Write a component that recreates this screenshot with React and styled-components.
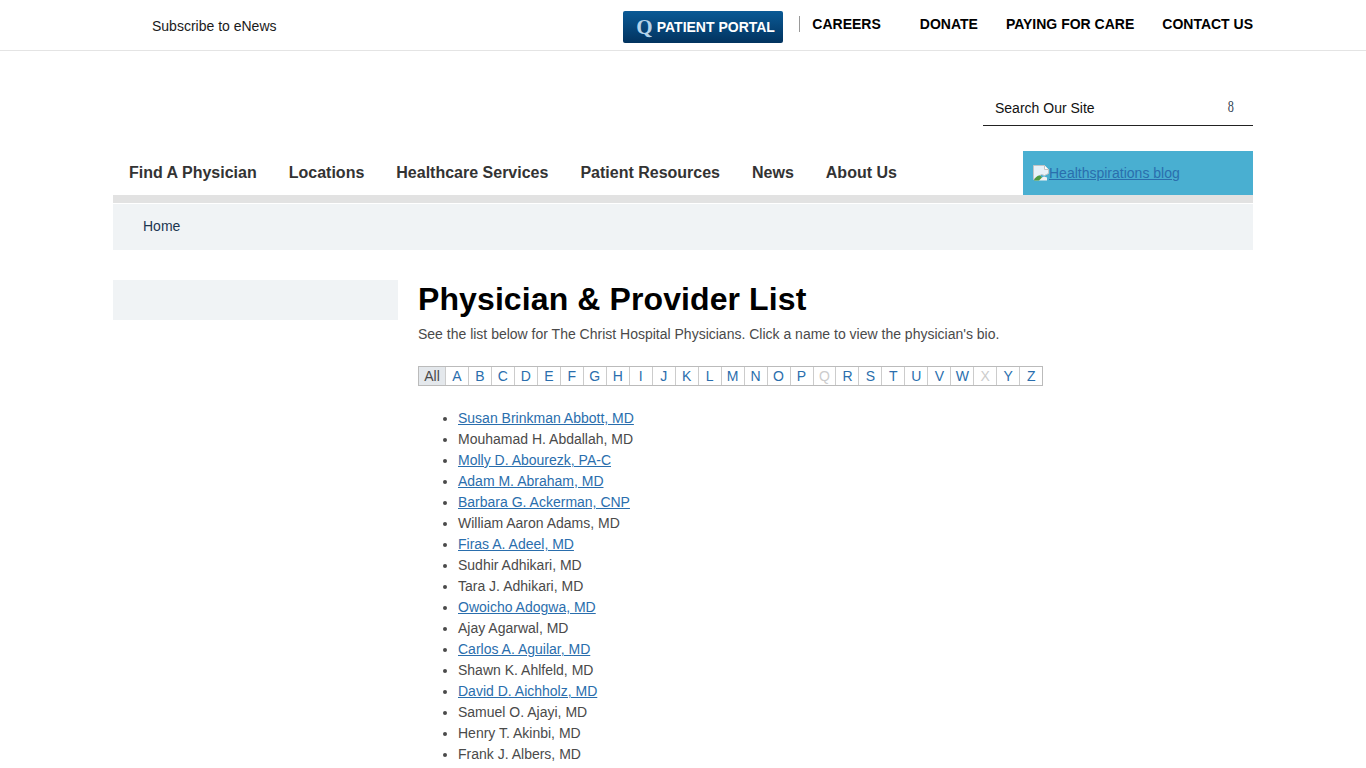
import React from "react";
import styled, { createGlobalStyle } from "styled-components";

const Global = createGlobalStyle`
  html, body { margin: 0; padding: 0; background: #fff; }
  body { font-family: "Liberation Sans", Arial, sans-serif; font-size: 14px; color: #4a4a4a; overflow: hidden; height: 768px; }
`;
const TopBar = styled.header`
  height: 50px; border-bottom: 1px solid #e4e4e4; display: flex; justify-content: center;
`;
const Wrap = styled.div`
  width: 1140px; margin: 0 auto;
`;
const TopInner = styled(Wrap)`
  display: flex; align-items: flex-start; height: 50px;
`;
const Subscribe = styled.a`
  margin: 18px 0 0 39px; font-size: 14px; line-height: 16px; color: #1a1a1a; text-decoration: none; flex: 1;
`;
const Portal = styled.a`
  margin-top: 11px; width: 160px; height: 32px; border-radius: 2px; box-sizing: border-box; padding-left: 13px;
  background: linear-gradient(#0a5a96, #02335f); color: #fff; display: flex; align-items: center; gap: 4px;
  font-weight: 700; font-size: 14px; text-decoration: none; white-space: nowrap;
`;
const PortalQ = styled.span`
  font-family: "Liberation Serif", serif; font-size: 21px; color: #b4d3ea; font-weight: 700; line-height: 32px;
`;
const TopNav = styled.nav`
  display: flex; margin-left: 16px; margin-top: 16px; align-items: flex-start;
`;
const TopLink = styled.a`
  font-weight: 700; font-size: 14px; line-height: 16px; color: #000; text-decoration: none; white-space: nowrap;
  margin-left: ${p => p.$gap}px;
  ${p => p.$first && `border-left: 1px solid #999; padding-left: 12px;`}
`;
const SearchRow = styled(Wrap)`
  display: flex; justify-content: flex-end; padding-top: 40px;
`;
const Search = styled.div`
  width: 270px; height: 35px; box-sizing: border-box; border-bottom: 1px solid #222; padding: 9px 20px 0 12px;
  display: flex; justify-content: space-between; font-size: 14px; line-height: 16px; color: #111;
`;
const SearchGlyph = styled.span`
  font-family: "Liberation Serif", serif; font-size: 17px; color: #345; line-height: 14px; transform: scaleX(.72); width: 6px;
`;
const NavRow = styled(Wrap)`
  display: flex; justify-content: space-between; margin-top: 25px; height: 44px;
`;
const MainNav = styled.nav`
  display: flex; gap: 32px; padding: 13px 0 0 16px;
`;
const MainLink = styled.a`
  font-weight: 700; font-size: 16px; line-height: 18px; color: #333; text-decoration: none; white-space: nowrap;
`;
const Blog = styled.div`
  width: 230px; height: 44px; background: #49afd1; box-sizing: border-box; padding: 14px 0 0 10px;
  display: flex; align-items: flex-start; font-size: 14px; line-height: 16px;
`;
const BlogLink = styled.a`
  color: #2a6ead; text-decoration: underline;
`;
const Band = styled(Wrap)`
  height: 8px; background: #e2e2e2;
`;
const Crumbs = styled(Wrap)`
  box-sizing: border-box; height: 47px; border-top: 1px solid #fff; background: #f0f3f5;
  padding: 14px 0 0 30px; line-height: 16px; color: #1c3650; font-size: 14px;
`;
const Body = styled(Wrap)`
  display: flex; margin-top: 30px; gap: 20px;
`;
const Side = styled.aside`
  width: 285px; height: 40px; background: #f0f3f5; flex: none;
`;
const Main = styled.main`
  flex: 1;
`;
const Title = styled.h1`
  margin: 0; font-size: 32px; line-height: 38px; font-weight: 700; color: #000; letter-spacing: .1px;
`;
const Lead = styled.p`
  margin: 8px 0 0; line-height: 16px; font-size: 14px; color: #4a4a4a;
`;
const Alpha = styled.div`
  display: inline-flex; margin-top: 24px; border: 1px solid #bbb; height: 18px;
`;
const Cell = styled.a`
  width: ${p => p.$w}px; text-align: center; font-size: 14px; line-height: 18px; text-decoration: none;
  color: ${p => p.$off ? "#ccc" : p.$on ? "#4a4a4a" : "#2a6ead"};
  background: ${p => p.$on ? "#e4e8ec" : "transparent"};
  & + & { border-left: 1px solid #ccc; }
`;
const List = styled.ul`
  margin: 22px 0 0; padding: 0 0 0 40px; list-style: disc; color: #4a4a4a;
`;
const Item = styled.li`
  line-height: 21px; font-size: 14px;
  a { color: #2a6ead; text-decoration: underline; }
`;

const letters = "ABCDEFGHIJKLMNOPQRSTUVWXYZ".split("");
const people = [
  ["Susan Brinkman Abbott, MD", 1], ["Mouhamad H. Abdallah, MD", 0], ["Molly D. Abourezk, PA-C", 1],
  ["Adam M. Abraham, MD", 1], ["Barbara G. Ackerman, CNP", 1], ["William Aaron Adams, MD", 0],
  ["Firas A. Adeel, MD", 1], ["Sudhir Adhikari, MD", 0], ["Tara J. Adhikari, MD", 0],
  ["Owoicho Adogwa, MD", 1], ["Ajay Agarwal, MD", 0], ["Carlos A. Aguilar, MD", 1],
  ["Shawn K. Ahlfeld, MD", 0], ["David D. Aichholz, MD", 1], ["Samuel O. Ajayi, MD", 0],
  ["Henry T. Akinbi, MD", 0], ["Frank J. Albers, MD", 0],
];
const BrokenImage = () => (
  <svg width="16" height="16" viewBox="0 0 16 16" aria-hidden="true">
    <path d="M0.5 0.5h11l4 4v4l-4 2-3-1-8 5z" fill="#e8f1f8" stroke="#c4c4c4" />
    <path d="M11.5 0.5v4h4" fill="#fff" stroke="#c4c4c4" />
    <path d="M1 15.5h13v-3l-3-1-2 1-2-1z" fill="#f2f2f2" />
    <path d="M1 15.5c1-3 3-5 6-5l2 2-3 3z" fill="#4f9a3e" />
  </svg>
);

export default function App() {
  return (
    <>
      <Global />
      <TopBar>
        <TopInner>
          <Subscribe>Subscribe to eNews</Subscribe>
          <Portal><PortalQ>Q</PortalQ>PATIENT PORTAL</Portal>
          <TopNav>
            <TopLink $first $gap={0}>CAREERS</TopLink>
            <TopLink $gap={39}>DONATE</TopLink>
            <TopLink $gap={28}>PAYING FOR CARE</TopLink>
            <TopLink $gap={28}>CONTACT US</TopLink>
          </TopNav>
        </TopInner>
      </TopBar>
      <SearchRow>
        <Search><span>Search Our Site</span><SearchGlyph>8</SearchGlyph></Search>
      </SearchRow>
      <NavRow>
        <MainNav>
          {["Find A Physician", "Locations", "Healthcare Services", "Patient Resources", "News", "About Us"].map(t => <MainLink key={t}>{t}</MainLink>)}
        </MainNav>
        <Blog><BrokenImage /><BlogLink>Healthspirations blog</BlogLink></Blog>
      </NavRow>
      <Band />
      <Crumbs>Home</Crumbs>
      <Body>
        <Side />
        <Main>
          <Title>Physician &amp; Provider List</Title>
          <Lead>See the list below for The Christ Hospital Physicians. Click a name to view the physician's bio.</Lead>
          <Alpha>
            <Cell $on $w={26}>All</Cell>
            {letters.map(l => <Cell key={l} $w={21.98} $off={l === "Q" || l === "X"}>{l}</Cell>)}
          </Alpha>
          <List>
            {people.map(([n, link]) => <Item key={n}>{link ? <a>{n}</a> : n}</Item>)}
          </List>
        </Main>
      </Body>
    </>
  );
}
